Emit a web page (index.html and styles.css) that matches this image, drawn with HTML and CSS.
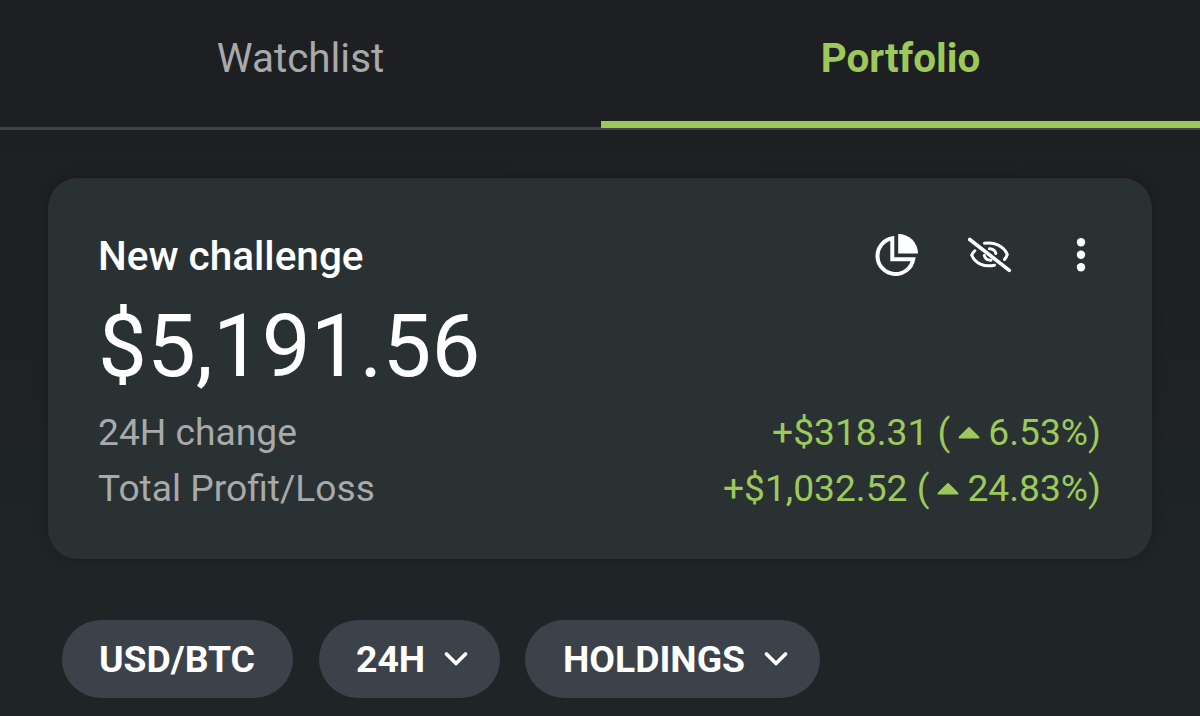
FILE: index.html
```html
<!DOCTYPE html>
<html lang="en">
<head>
    <meta charset="UTF-8">
    <meta name="viewport" content="width=device-width, initial-scale=1.0">
    <title>Portfolio</title>
    <link rel="stylesheet" href="styles.css">
</head>
<body>
    <nav class="tabs">
        <div class="tab">Watchlist</div>
        <div class="tab active">Portfolio</div>
    </nav>

    <div class="card">
        <div class="card-header">
            <div class="card-title">New challenge</div>
            <div class="actions">
                <svg width="44" height="44" viewBox="0 0 44 44">
                    <path d="M17.300 5.300A18 18 0 1 0 38.200 26.300H17.300Z" fill="none" stroke="#fff" stroke-width="4"/>
                    <path d="M23.200 1A19.500 19.500 0 0 1 43 20.500H23.200Z" fill="#fff"/>
                </svg>
                <svg width="44" height="44" viewBox="0 0 44 44">
                    <g fill="none" stroke="#fff" stroke-width="3" stroke-linecap="round">
                        <path d="M16.500 10.300C26 8.500 36 13 39.300 21.500C38.600 23.500 37.800 25 36.500 26.500"/>
                        <path d="M6.800 17.800C5.300 19 4.300 20.500 3.700 22C7 30.500 16 34.500 26.500 32.200"/>
                        <path d="M21.500 15.800C25 16 27.300 17.500 27.800 20.500"/>
                        <path d="M16.300 22.500C17 25.500 19.500 27.300 23 27.200"/>
                        <path d="M1.700 6.500L41.300 37.300" stroke-width="3.600"/>
                    </g>
                </svg>
                <svg width="12" height="44" viewBox="0 0 12 44" fill="#fff">
                    <circle cx="6" cy="9.200" r="4.200"/>
                    <circle cx="6" cy="21.800" r="4.200"/>
                    <circle cx="6" cy="34.300" r="4.200"/>
                </svg>
            </div>
        </div>
        <div class="amount">$5,191.56</div>
        <div class="row">
            <span>24H change</span>
            <span class="gain">+$318.31 (<svg class="up" width="22" height="13" viewBox="0 0 22 13"><path d="M1.500 11.500L11 2L20.500 11.500Z"/></svg>6.53%)</span>
        </div>
        <div class="row">
            <span>Total Profit/Loss</span>
            <span class="gain">+$1,032.52 (<svg class="up" width="22" height="13" viewBox="0 0 22 13"><path d="M1.500 11.500L11 2L20.500 11.500Z"/></svg>24.83%)</span>
        </div>
    </div>

    <div class="chips">
        <div class="chip chip-currency">USD/BTC</div>
        <div class="chip chip-period">
            24H
            <svg width="24" height="16" viewBox="0 0 24 16"><path d="M2.500 3L12 12.500L21.500 3"/></svg>
        </div>
        <div class="chip chip-sort">
            HOLDINGS
            <svg width="24" height="16" viewBox="0 0 24 16"><path d="M2.500 3L12 12.500L21.500 3"/></svg>
        </div>
    </div>
</body>
</html>
```

FILE: styles.css
```css
* {
    box-sizing: border-box;
}
body {
    margin: 0;
    height: 716px;
    overflow: hidden;
    font-family: Roboto, sans-serif;
    color: #fff;
    background: linear-gradient(#1e1f23 0, #1e1f23 130px, #1f2526 620px);
}
.tabs {
    display: flex;
    height: 130px;
    border-bottom: 3px solid #3d4249;
}
.tab {
    flex: 1;
    height: 128px;
    padding: 31px 0 0 1px;
    font-size: 40.4px;
    line-height: 56px;
    text-align: center;
    color: #a8a9aa;
}
.tab.active {
    margin-left: 1px;
    padding-left: 0;
    font-weight: 700;
    color: #9cc95a;
    border-bottom: 7px solid #9cc95a;
}
.card {
    height: 381px;
    margin: 48px 48px 0;
    padding: 50px 51px 0 50px;
    border-radius: 30px;
    background: #293133;
    box-shadow: 0 0 12px rgba(0, 0, 0, 0.2);
}
.card-header {
    display: flex;
    justify-content: space-between;
    align-items: center;
    height: 56px;
}
.card-title {
    font-size: 40.5px;
    font-weight: 500;
}
.actions {
    display: flex;
    align-items: center;
    margin: 0 14px 2px 0;
}
.actions svg + svg {
    margin-left: 49px;
}
.actions svg:last-child {
    margin-left: 63px;
}
.amount {
    padding-top: 4px;
    font-size: 87px;
    line-height: 116px;
}
.row {
    display: flex;
    justify-content: space-between;
    font-size: 37.2px;
    line-height: 56px;
    color: #a8a9aa;
}
.gain {
    color: #9cc95a;
}
.up {
    margin: 0 8px 6px 8px;
    fill: #9cc95a;
    stroke: #9cc95a;
    stroke-width: 2;
    stroke-linejoin: round;
}
.chips {
    display: flex;
    margin: 61px 0 0 62px;
}
.chip {
    display: flex;
    justify-content: space-between;
    align-items: center;
    height: 78px;
    padding: 0 32px 1px 37px;
    border-radius: 39px;
    font-size: 37.3px;
    font-weight: 700;
    background: #3b4249;
}
.chip svg {
    fill: none;
    stroke: #fff;
    stroke-width: 3.6;
    stroke-linecap: round;
    stroke-linejoin: round;
}
.chip-currency {
    width: 231px;
}
.chip-period {
    width: 181px;
    margin-left: 26px;
}
.chip-sort {
    width: 295px;
    margin-left: 25px;
    padding-left: 38px;
}
```
